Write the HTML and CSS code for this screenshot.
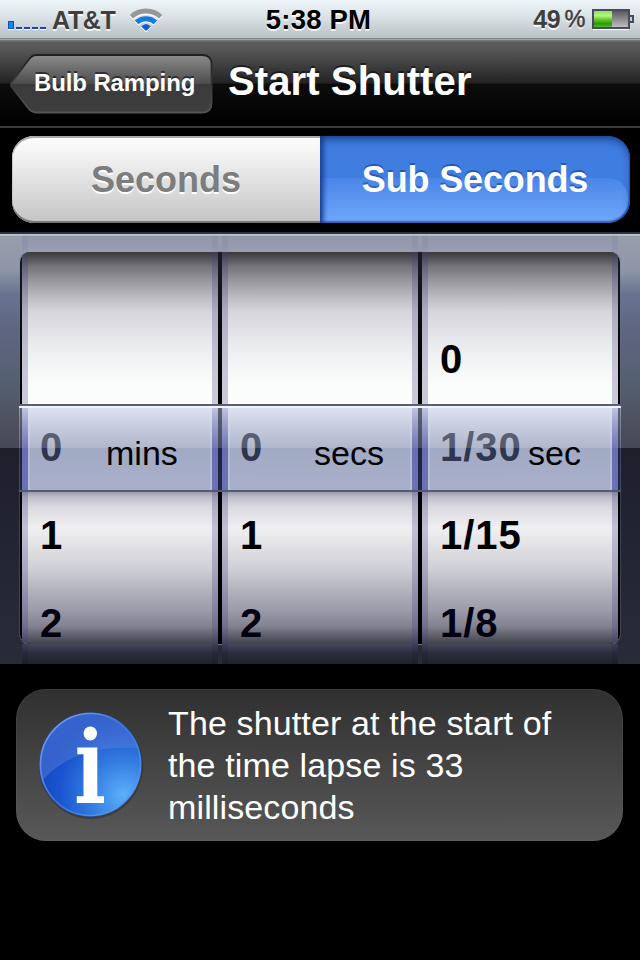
FILE: index.html
```html
<!DOCTYPE html>
<html lang="en">
<head>
<meta charset="utf-8">
<title>Start Shutter</title>
<link rel="stylesheet" href="styles.css">
</head>
<body>
<header class="status">
  <div class="status-left">
    <div class="signal"><i class="on"></i><i></i><i></i><i></i><i></i></div>
    <span class="carrier">AT&amp;T</span>
    <svg class="wifi" width="34" height="27" viewBox="129 7 34 27">
      <g fill="none" stroke="#fff" stroke-opacity=".85" transform="translate(0 1)">
        <path d="M131.4 17.2A21.5 21.5 0 0 1 160.6 17.2" stroke-width="5"/>
        <path d="M136.600 22.6A14 14 0 0 1 155.4 22.6" stroke-width="5"/>
        <path d="M146 31L141 26Q146 21 151 26Z" fill="#fff"/>
      </g>
      <path d="M131.4 16.7A21.5 21.5 0 0 1 160.6 16.7" fill="none" stroke="#979797" stroke-width="4.8"/>
      <path d="M136.6 22.4A14 14 0 0 1 155.4 22.4" fill="none" stroke="#147be6" stroke-width="5"/>
      <path d="M146 31L141.2 26.4Q146 21.400 150.800 26.4Z" fill="#0d5cd0"/>
    </svg>
  </div>
  <span class="clock">5:38 PM</span>
  <div class="status-right">
    <span class="percent">49<span class="sign">%</span></span>
    <svg class="battery" width="43" height="21" viewBox="0 0 43 21">
      <defs>
        <linearGradient id="charge" x2="0" y2="1"><stop offset="0" stop-color="#8be35c"/><stop offset=".3" stop-color="#b5f582"/><stop offset=".55" stop-color="#5cc52b"/><stop offset=".8" stop-color="#2c9a05"/><stop offset="1" stop-color="#54b62c"/></linearGradient>
        <linearGradient id="empty" x2="0" y2="1"><stop offset="0" stop-color="#555"/><stop offset=".45" stop-color="#858585"/><stop offset="1" stop-color="#c4c4c4"/></linearGradient>
      </defs>
      <path d="M1 20.500H37" stroke="#fff"/>
      <rect x="1" y="1" width="36" height="18" fill="url(#empty)" stroke="#454b60" stroke-width="2"/>
      <rect x="2" y="2" width="18" height="16" fill="url(#charge)"/>
      <path d="M38 7H41V13H38" fill="#c4cbd2" stroke="#454b60" stroke-width="2"/>
    </svg>
  </div>
</header>

<nav class="nav">
  <div class="back">
    <svg class="back-shape" width="203" height="60" viewBox="0 0 203 60">
      <defs>
        <linearGradient id="back-fill" x2="0" y2="1"><stop offset="0" stop-color="#8c8c8c"/><stop offset=".5" stop-color="#4c4c4c"/><stop offset=".51" stop-color="#3b3b3b"/><stop offset="1" stop-color="#3e3e3e"/></linearGradient>
        <linearGradient id="back-edge" x2="0" y2="1"><stop offset="0" stop-color="#202020"/><stop offset=".5" stop-color="#383838"/><stop offset="1" stop-color="#555"/></linearGradient>
      </defs>
      <path d="M26 1H192Q201.500 1 201.500 10V49Q201.500 58.500 192 58.500H26Q22 58.500 18.500 54.500L1 32Q0 30.500 1 29L18.500 6Q22 1 26 1Z" fill="url(#back-fill)" stroke="url(#back-edge)" stroke-width="1.800"/>
    </svg>
    <span class="back-text">Bulb Ramping</span>
  </div>
  <h1 class="title">Start Shutter</h1>
</nav>

<div class="segments">
  <div class="segment">Seconds</div>
  <div class="segment selected"><span>Sub Seconds</span></div>
</div>

<main class="picker">
  <div class="strip top"><i></i><i></i><i></i></div>
  <div class="wheels">
    <div class="wheel"><b></b><b class="current">0</b><b>1</b><b class="far">2</b></div>
    <div class="wheel"><b></b><b class="current">0</b><b>1</b><b class="far">2</b></div>
    <div class="wheel fractions"><b>0</b><b class="current">1/30</b><b>1/15</b><b class="far">1/8</b></div>
  </div>
  <div class="strip bottom"><i></i><i></i><i></i></div>
  <div class="indicator">
    <div class="unit mins">mins</div>
    <div class="unit secs">secs</div>
    <div class="unit sec">sec</div>
  </div>
</main>

<section class="info">
  <svg class="info-icon" width="108" height="110" viewBox="0 0 108 110">
    <defs>
      <radialGradient id="ball" cx=".83" cy=".8" r=".8"><stop offset="0" stop-color="#5cb0fb"/><stop offset=".4" stop-color="#357fe2"/><stop offset=".8" stop-color="#1a55cf"/><stop offset="1" stop-color="#164bc5"/></radialGradient>
      <linearGradient id="rim" x2="1" y2="1"><stop offset="0" stop-color="#8caef0"/><stop offset=".5" stop-color="#3a70d5"/><stop offset="1" stop-color="#67a6f0"/></linearGradient>
      <clipPath id="disc"><ellipse cx="53.500" cy="53.500" rx="50" ry="51"/></clipPath>
    </defs>
    <ellipse cx="54" cy="55" rx="52" ry="53" fill="#222" opacity=".4"/>
    <ellipse cx="53.500" cy="53.500" rx="51.300" ry="52.300" fill="#2456b8"/>
    <ellipse cx="53.500" cy="53.500" rx="50" ry="51" fill="url(#ball)" stroke="url(#rim)" stroke-width="1.600"/>
    <path d="M5 70Q40 30 108 38V0H0V76Z" fill="#698ad8" opacity=".38" clip-path="url(#disc)"/>
    <ellipse cx="53.300" cy="22.500" rx="6.700" ry="7" fill="#fff"/>
    <path d="M40.300 36.600H60.300V85.300H67V92H39.800V85.300H46.500V43.300H40.300Z" fill="#fff"/>
  </svg>
  <p class="info-text">The shutter at the start of<br>the time lapse is 33<br>milliseconds</p>
</section>
</body>
</html>
```
FILE: styles.css
```css
* { box-sizing: border-box; }

body {
  margin: 0;
  width: 640px;
  height: 960px;
  overflow: hidden;
  background: #000;
  color: #fff;
  font-family: "Liberation Sans", Arial, sans-serif;
}

svg { display: block; }

.status {
  display: grid;
  grid-template-columns: 1fr auto 1fr;
  height: 40px;
  background: linear-gradient(#edf5f9, #dbe3e7 40%, #b9c1c4 95%, #78868a 95%, #78868a 98%, #a0a5a8 98%);
  color: #3f3f3f;
  font-weight: bold;
  text-shadow: 0 2px 0 rgba(255, 255, 255, .8);
}

.status-left { display: flex; padding-left: 8px; }
.signal { display: flex; align-items: flex-end; gap: 2px; height: 29px; width: 44px; }
.signal i { width: 6px; height: 2px; background: #1045c8; box-shadow: 0 1px 0 #fff; }
.signal .on { height: 8px; background: #1685ec; border: 1px solid #0b4fc2; }
.carrier { font-size: 25px; line-height: 40px; width: 77px; letter-spacing: -.3px; }
.wifi { margin-top: 7px; }
.clock { color: #000; font-size: 27.5px; line-height: 39px; letter-spacing: .2px; margin-left: -3px; }
.status-right { display: flex; justify-content: flex-end; padding-right: 5px; }
.percent { display: flex; gap: 4px; margin-right: 7px; font-size: 25px; line-height: 39px; letter-spacing: -.3px; }
.sign { font-weight: normal; font-size: 23.5px; -webkit-text-stroke: .5px #3f3f3f; }
.battery { margin-top: 9px; flex: none; }

.nav {
  display: flex;
  height: 88px;
  padding: 14px 0 0 10px;
  background: linear-gradient(#777 0, #777 1px, #5d5d5d 2px, #555 10px, #232323 43px, #0c0c0c 44px, #000 86px, #3b3b3b 86px);
}

.back { display: grid; width: 203px; height: 60px; }
.back > * { grid-area: 1 / 1; }
.back-text {
  padding-left: 24px;
  font-size: 24px;
  font-weight: bold;
  letter-spacing: -.12px;
  line-height: 58px;
  white-space: nowrap;
  text-shadow: 0 -2px 0 rgba(0, 0, 0, .5);
}

.title {
  margin: 0 0 0 15px;
  font-size: 40px;
  letter-spacing: .1px;
  line-height: 54px;
  white-space: nowrap;
  text-shadow: 0 -2px 0 rgba(0, 0, 0, .5);
}

.segments {
  display: flex;
  width: 618px;
  height: 87px;
  margin: 8px 0 9px 12px;
}

.segment {
  width: 308px;
  font-size: 36px;
  font-weight: bold;
  line-height: 88px;
  text-align: center;
  color: #7d7d7d;
  text-shadow: 0 2px 0 #fff;
  border-radius: 22px 0 0 22px;
  background: linear-gradient(#fff, #f4f4f4 20%, #c4c4c4);
  box-shadow: inset 0 2px 0 #aaa, inset 0 -2px 0 #777, inset 1px 0 0 #ccc;
}

.segment.selected {
  position: relative;
  width: 310px;
  color: #fff;
  letter-spacing: -.15px;
  border-radius: 0 22px 22px 0;
  background: #407de1;
  box-shadow: none;
  text-shadow: 0 -2px 0 rgba(20, 60, 140, .55);
  overflow: hidden;
}

/* lower gloss with its own rounded corner */
.segment.selected::before {
  content: "";
  position: absolute;
  inset: 42px 2px 0 2px;
  border-radius: 0 20px 22px 0;
  background: linear-gradient(#4a86e7, #70a8fd);
}

.selected span {
  position: relative;
  display: block;
  height: 87px;
  border-radius: 0 22px 22px 0;
  box-shadow: inset 0 5px 8px -2px rgba(15, 50, 125, .85), inset 5px 0 4px -1px rgba(20, 60, 140, .7), inset -1px -2px 1px rgba(20, 60, 140, .5);
}

.picker {
  position: relative;
  height: 432px;
  padding: 0 20px;
  background: linear-gradient(#2b313f 0, #2b313f 2px, #c4c8d0 2px, #c4c8d0 3px, #999eae 4px, #8e96a8 38px, #69738f 62px, #5f6682 95px, #566073 145px, #484855 216px, #1f1f2c 216px, #232431 300px, #292b39 432px);
}

.strip { display: grid; grid-template-columns: repeat(3, 196px); gap: 4px; padding: 0 2px; }
.strip.top { height: 20px; padding-top: 4px; }
.strip.top i { background: linear-gradient(#9297a9, #999fb3); box-shadow: inset 6px 0 0 rgba(80, 85, 110, .08), inset -6px 0 0 rgba(80, 85, 110, .08); }
.strip.bottom { height: 20px; }
.strip.bottom i { background: linear-gradient(#45475a, #2c2e3e 45%, #20222e); box-shadow: inset 6px 0 0 rgba(15, 15, 45, .15), inset -6px 0 0 rgba(15, 15, 45, .15); }

.wheels {
  display: grid;
  grid-template-columns: repeat(3, 196px);
  gap: 4px;
  height: 392px;
  padding: 0 2px;
  overflow: hidden;
  border-radius: 10px;
  background: linear-gradient(#1c1d20, #000 120px);
  box-shadow: 0 1px 0 #707284, 0 0 0 1px rgba(110, 120, 140, .35);
}

.wheel {
  padding-top: 63px;
  overflow: hidden;
  background: linear-gradient(#39393b 0, #727277 14px, #98989d 29px, #bcbcc1 46px, #d6d6db 60px, #e2e2e6 78px, #f2f3f4 108px, #fafbfb 130px, #fdfdfd 152px, #fdfdfd 238px, #9795a8 239px, #bebdca 245px, #d8d8df 254px, #f0f0f3 276px, #e3e3e6 293px, #cdcdd4 318px, #b3b3be 338px, #9b9ba9 358px, #828291 374px, #62626e 383px, #40404b 392px);
  box-shadow: inset 6px 0 0 rgba(65, 60, 130, .27), inset -6px 0 0 rgba(65, 60, 130, .27);
}

.wheel b {
  display: block;
  height: 88px;
  padding-left: 18px;
  font-size: 40px;
  line-height: 89px;
  color: #000;
}
.fractions b { letter-spacing: 1px; }
.wheel .current { color: #202020; }
.wheel .far { color: #000010; }

/* translucent glass bar laid over the wheels */
.indicator {
  position: absolute;
  left: 19px;
  top: 172px;
  width: 602px;
  height: 88px;
  display: grid;
  grid-template-columns: repeat(3, 196px);
  gap: 4px;
  padding: 4px 3px 2px;
  background: linear-gradient(#566174 0, #566174 2px, #f0f5fa 2px, #f0f5fa 4px, rgba(184, 198, 229, .5) 4px, rgba(119, 129, 165, .57) 44px, rgba(58, 76, 130, .47) 44px, rgba(72, 88, 145, .47) 86px, #505c70 86px);
}

.unit {
  height: 82px;
  color: #000;
  font-size: 34px;
  line-height: 90px;
  white-space: nowrap;
  background:
    linear-gradient(rgba(70, 80, 190, .03), rgba(60, 65, 175, .42) 40px) 0 0 / 6px 82px no-repeat,
    linear-gradient(rgba(70, 80, 190, .03), rgba(60, 65, 175, .42) 40px) 100% 0 / 6px 82px no-repeat,
    linear-gradient(rgba(220, 225, 245, .3), rgba(220, 225, 245, .3)) 6px 0 / 2px 82px no-repeat,
    linear-gradient(rgba(220, 225, 245, .3), rgba(220, 225, 245, .3)) 188px 0 / 2px 82px no-repeat;
}
.mins { padding-left: 84px; }
.secs { padding-left: 92px; }
.sec { padding-left: 106px; }

.info {
  display: flex;
  width: 607px;
  height: 152px;
  margin: 25px 0 0 16px;
  padding: 22px 0 0 21px;
  border-radius: 30px;
  background: linear-gradient(#303030, #585858);
  box-shadow: inset 0 0 0 1px rgba(130, 130, 130, .13);
}

.info-text {
  margin: -9px 0 0 23px;
  font-size: 34px;
  letter-spacing: .13px;
  line-height: 42px;
  white-space: nowrap;
}
```
